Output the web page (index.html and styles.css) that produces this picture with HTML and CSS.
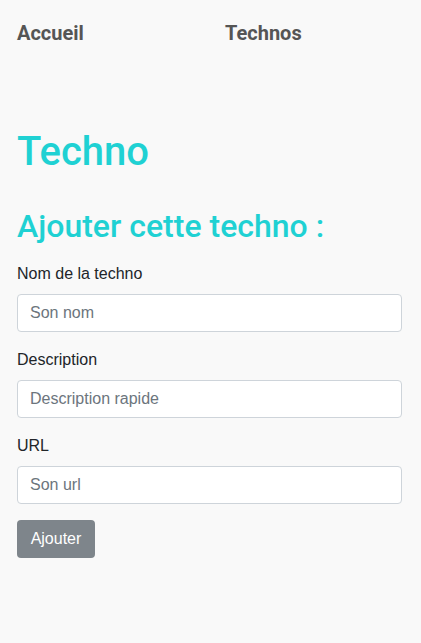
FILE: index.html
```html
<!DOCTYPE html>
<html lang="fr">
<head>
<meta charset="utf-8">
<title>Techno</title>
<link rel="stylesheet" href="styles.css">
</head>
<body>
<nav class="nav">
  <a class="nav-link" href="#">Accueil</a>
  <a class="nav-link" href="#">Technos</a>
</nav>
<main class="page">
  <h1 class="title">Techno</h1>
  <h2 class="subtitle">Ajouter cette techno :</h2>
  <form class="form">
    <div class="field">
      <label class="label" for="nom">Nom de la techno</label>
      <input class="input" id="nom" type="text" placeholder="Son nom">
    </div>
    <div class="field">
      <label class="label" for="desc">Description</label>
      <input class="input" id="desc" type="text" placeholder="Description rapide">
    </div>
    <div class="field">
      <label class="label" for="url">URL</label>
      <input class="input" id="url" type="text" placeholder="Son url">
    </div>
    <button class="btn" type="button">Ajouter</button>
  </form>
</main>
</body>
</html>
```
FILE: styles.css
```css
html, body {
  margin: 0;
  padding: 0;
  background: #f9f9f9;
}
body {
  font-family: "Liberation Sans", Arial, sans-serif;
  font-size: 16px;
  line-height: 24px;
  color: #212529;
  padding: 0 19px 0 17px;
}
.nav {
  display: grid;
  grid-template-columns: 208px auto;
  padding-top: 21px;
  height: 107px;
  box-sizing: border-box;
}
.nav-link {
  font-family: Roboto, sans-serif;
  font-weight: 700;
  font-size: 20px;
  line-height: 24px;
  color: #555555;
  text-decoration: none;
}
.title {
  font-family: Roboto, sans-serif;
  font-weight: 500;
  font-size: 40px;
  line-height: 48px;
  color: #1fd1d3;
  margin: 21px 0 31px;
}
.subtitle {
  font-family: Roboto, sans-serif;
  font-weight: 500;
  font-size: 32px;
  line-height: 38px;
  color: #1fd1d3;
  margin: 0 0 17px;
}
.form {
  display: flex;
  flex-direction: column;
  gap: 16px;
  align-items: flex-start;
}
.field {
  display: flex;
  flex-direction: column;
  gap: 8px;
  align-self: stretch;
}
.label {
  font-size: 16px;
  line-height: 24px;
}
.input {
  box-sizing: border-box;
  height: 38px;
  padding: 6px 12px;
  border: 1px solid #ced4da;
  border-radius: 4px;
  background: #fff;
  font-family: "Liberation Sans", Arial, sans-serif;
  font-size: 16px;
  color: #212529;
  outline: none;
}
.input::placeholder {
  color: #6c757d;
}
.btn {
  box-sizing: border-box;
  height: 38px;
  width: 78px;
  padding: 6px 12px;
  border: none;
  border-radius: 4px;
  background: #7e858b;
  color: #fff;
  font-family: "Liberation Sans", Arial, sans-serif;
  font-size: 16px;
}
```
